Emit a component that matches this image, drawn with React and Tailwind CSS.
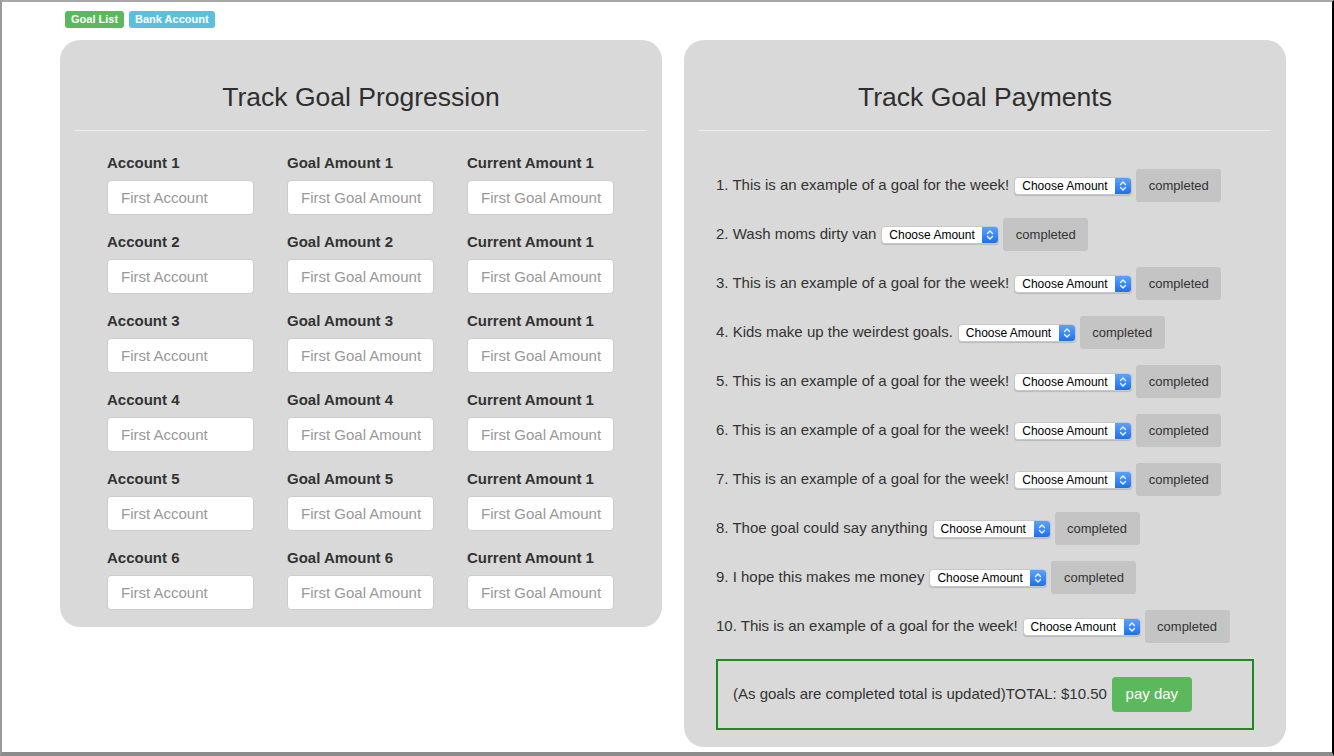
import React from "react";

const accounts = [1, 2, 3, 4, 5, 6];

const goals = [
  "This is an example of a goal for the week!",
  "Wash moms dirty van",
  "This is an example of a goal for the week!",
  "Kids make up the weirdest goals.",
  "This is an example of a goal for the week!",
  "This is an example of a goal for the week!",
  "This is an example of a goal for the week!",
  "Thoe goal could say anything",
  "I hope this makes me money",
  "This is an example of a goal for the week!",
];

const FakeSelect = () => (
  <div className="flex h-[18px] w-[118px] items-stretch rounded-[4px] border border-[#c8c8c8] bg-white shadow-[0_1px_1px_rgba(0,0,0,0.15)] overflow-hidden">
    <span className="flex flex-1 items-center pl-[7px] text-[12px] leading-none text-black">
      Choose Amount
    </span>
    <span className="flex w-[16px] items-center justify-center bg-gradient-to-b from-[#5aa2fb] to-[#1d6ff0]">
      <svg width="8" height="12" viewBox="0 0 8 12" fill="none">
        <path d="M1.5 4.5 L4 2 L6.5 4.5" stroke="white" strokeWidth="1.3" strokeLinecap="round" strokeLinejoin="round" />
        <path d="M1.5 7.5 L4 10 L6.5 7.5" stroke="white" strokeWidth="1.3" strokeLinecap="round" strokeLinejoin="round" />
      </svg>
    </span>
  </div>
);

const Field = ({ label, placeholder }) => (
  <div className="flex flex-col">
    <label className="h-[20px] text-[15px] font-bold leading-[20px] text-[#333]">{label}</label>
    <input
      placeholder={placeholder}
      className="mt-[7px] h-[35px] w-[147px] rounded-[4px] border border-[#ccc] bg-white pl-[13px] pr-[4px] text-[15px] text-[#333] placeholder:text-[#999] outline-none"
    />
  </div>
);

const PanelHeader = ({ title }) => (
  <div className="mx-[15px] border-b border-[#ebebeb] pt-[41px] pb-[17px] text-center">
    <h2 className="text-[26.5px] leading-[32px] text-[#2e2e2e]">{title}</h2>
  </div>
);

const App = () => {
  return (
    <div
      className="h-[756px] w-[1334px] overflow-hidden border-t-2 border-l-2 border-r-2 border-b-4 border-t-[#a8a8a8] border-l-[#9a9a9a] border-r-black border-b-[#8c8c8c] bg-white text-[#333]"
      style={{ fontFamily: '"Liberation Sans", Arial, Helvetica, sans-serif' }}
    >
      <div className="pl-[58px] pt-[9px]">
        <div className="ml-[5px] flex h-[17px] gap-[5px]">
          <span className="flex items-center rounded-[3px] bg-[#5cb85c] px-[6px] text-[11px] font-bold text-white">
            Goal List
          </span>
          <span className="flex items-center rounded-[3px] bg-[#5bc0de] px-[6px] text-[11px] font-bold text-white">
            Bank Account
          </span>
        </div>

        <div className="mt-[12px] flex items-start gap-[22px]">
          {/* left panel */}
          <div className="w-[602px] rounded-[20px] bg-[#d9d9d9] pb-[17px]">
            <PanelHeader title="Track Goal Progression" />
            <div className="mt-[22px] grid grid-cols-[180px_180px_180px] gap-y-[17px] pl-[47px]">
              {accounts.map((n) => (
                <React.Fragment key={n}>
                  <Field label={`Account ${n}`} placeholder="First Account" />
                  <Field label={`Goal Amount ${n}`} placeholder="First Goal Amount" />
                  <Field label="Current Amount 1" placeholder="First Goal Amount" />
                </React.Fragment>
              ))}
            </div>
          </div>

          {/* right panel */}
          <div className="w-[602px] rounded-[20px] bg-[#d9d9d9] pb-[17px]">
            <PanelHeader title="Track Goal Payments" />
            <div className="mt-[30px] pl-[32px]">
              {goals.map((g, i) => (
                <div key={i} className="flex h-[49px] items-center text-[15px]">
                  <span>
                    {i + 1}. {g}
                  </span>
                  <span className="ml-[5px]">
                    <FakeSelect />
                  </span>
                  <button className="ml-[4px] h-[33px] w-[85px] rounded-[3px] bg-[#c4c4c4] text-[13px] text-[#333]">
                    completed
                  </button>
                </div>
              ))}
              <div className="mt-[8px] flex h-[71px] w-[538px] items-center border-2 border-[#1f8a1f] pl-[15px] text-[15px]">
                <span>(As goals are completed total is updated)TOTAL: $10.50</span>
                <button className="ml-[5px] h-[35px] w-[80px] rounded-[4px] bg-[#5cb85c] text-[15px] text-white">
                  pay day
                </button>
              </div>
            </div>
          </div>
        </div>
      </div>
    </div>
  );
};

export default App;
